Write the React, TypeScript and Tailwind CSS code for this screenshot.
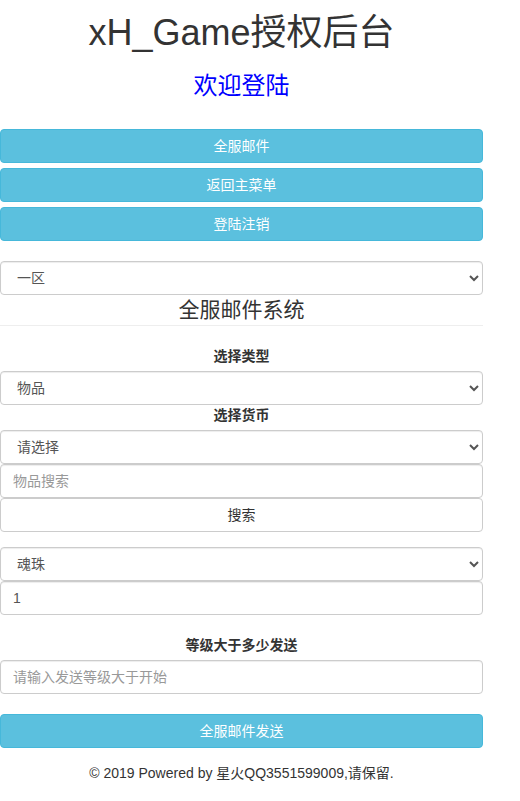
import React from "react";

const font = { fontFamily: '"Liberation Sans", "Noto Sans CJK SC", sans-serif' };

const infoBtn =
  "block w-full h-[34px] rounded-[4px] border border-[#46b8da] bg-[#5bc0de] text-white text-[14px] text-center";

const control =
  "block w-full h-[34px] rounded-[4px] border border-[#ccc] bg-white px-3 text-[14px] text-[#555] shadow-[inset_0_1px_1px_rgba(0,0,0,0.075)] outline-none";

const Label = ({ children }: { children: React.ReactNode }) => (
  <div className="text-center">
    <label className="inline-block mb-[5px] text-[14px] leading-[20px] font-bold text-[#333]">
      {children}
    </label>
  </div>
);

export default function App() {
  return (
    <div className="w-[483px] text-[#333] text-[14px] bg-white" style={font}>
      <h1 className="pt-[13px] text-center text-[36px] leading-[40px]">xH_Game授权后台</h1>
      <h2 className="mt-[20px] text-center text-[24px] leading-[26px] text-[#0000ff]">欢迎登陆</h2>

      <div className="mt-[30px] flex flex-col gap-[5px]">
        <button className={infoBtn}>全服邮件</button>
        <button className={infoBtn}>返回主菜单</button>
        <button className={infoBtn}>登陆注销</button>
      </div>

      <select className={`${control} mt-[20px]`} defaultValue="1">
        <option value="1">一区</option>
      </select>

      <h3 className="text-center text-[21px] leading-[30px]">全服邮件系统</h3>
      <hr className="border-0 border-t border-[#eee] mb-[20px]" />

      <Label>选择类型</Label>
      <select className={control} defaultValue="item">
        <option value="item">物品</option>
      </select>
      <Label>选择货币</Label>
      <select className={control} defaultValue="">
        <option value="">请选择</option>
      </select>
      <input className={`${control} placeholder:text-[#999]`} placeholder="物品搜索" />
      <button className="block w-full h-[34px] rounded-[4px] border border-[#ccc] bg-white text-[14px] text-[#333] text-center">
        搜索
      </button>

      <select className={`${control} mt-[15px]`} defaultValue="hz">
        <option value="hz">魂珠</option>
      </select>
      <input className={control} defaultValue="1" />

      <div className="mt-[20px]">
        <Label>等级大于多少发送</Label>
      </div>
      <input className={`${control} placeholder:text-[#999]`} placeholder="请输入发送等级大于开始" />

      <button className={`${infoBtn} mt-[20px]`}>全服邮件发送</button>

      <p className="mt-[15px] text-center text-[14px] leading-[20px]">
        © 2019 Powered by 星火QQ3551599009,请保留.
      </p>
    </div>
  );
}
